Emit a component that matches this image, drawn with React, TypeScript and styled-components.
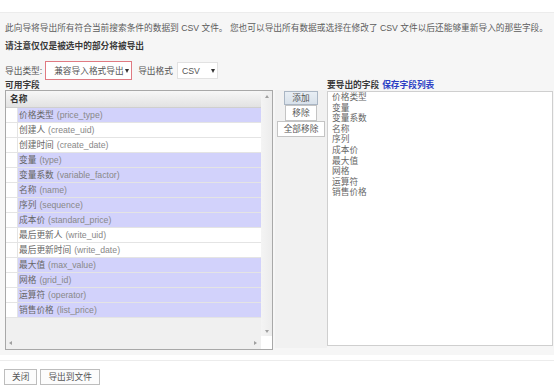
import React from 'react';
import styled, { createGlobalStyle } from 'styled-components';

type Field = {
	label: string;
	name: string;
	selected: boolean;
};

const fields: Field[] = [
	{ label: '价格类型', name: 'price_type', selected: true },
	{ label: '创建人', name: 'create_uid', selected: false },
	{ label: '创建时间', name: 'create_date', selected: false },
	{ label: '变量', name: 'type', selected: true },
	{ label: '变量系数', name: 'variable_factor', selected: true },
	{ label: '名称', name: 'name', selected: true },
	{ label: '序列', name: 'sequence', selected: true },
	{ label: '成本价', name: 'standard_price', selected: true },
	{ label: '最后更新人', name: 'write_uid', selected: false },
	{ label: '最后更新时间', name: 'write_date', selected: false },
	{ label: '最大值', name: 'max_value', selected: true },
	{ label: '网格', name: 'grid_id', selected: true },
	{ label: '运算符', name: 'operator', selected: true },
	{ label: '销售价格', name: 'list_price', selected: true },
];

const exported = ['价格类型', '变量', '变量系数', '名称', '序列', '成本价', '最大值', '网格', '运算符', '销售价格'];

const GlobalStyle = createGlobalStyle`
	html, body {
		margin: 0;
		padding: 0;
		background: #fff;
	}
	body {
		font-family: "Liberation Sans", "Noto Sans CJK SC", sans-serif;
		font-size: 8.7px;
		line-height: 12px;
		color: #5a5a5a;
	}
`;

const TopStrip = styled.div`
	height: 12px;
	border-bottom: 1px solid #ececec;
`;

const Main = styled.div`
	background: #f6f6f6;
	padding: 9px 1px 5px 5px;
`;

const Intro = styled.div`
	height: 12px;
	line-height: 12px;
	white-space: nowrap;
	font-size: 8.7px;
	color: #5c5c5c;
`;

const Notice = styled.div`
	margin-top: 6px;
	height: 12px;
	line-height: 12px;
	font-weight: bold;
	white-space: nowrap;
	color: #3a3a3a;
`;

const TypeRow = styled.div`
	margin-top: 9px;
	height: 19px;
	display: flex;
	align-items: center;
	white-space: nowrap;
`;

const Label = styled.span<{ $gap?: number }>`
	margin-right: ${p => p.$gap ?? 3}px;
	color: #555;
`;

const Highlight = styled.div`
	height: 17px;
	width: 85px;
	border: 1px solid #e07a82;
	background: #fff;
	display: flex;
	margin-right: 6px;
`;

const FakeSelect = styled.div<{ $w: number; $pad: number }>`
	box-sizing: border-box;
	width: ${p => p.$w}px;
	height: 17px;
	display: flex;
	align-items: center;
	justify-content: space-between;
	padding: 0 2px 0 ${p => p.$pad}px;
	background: #fff;
	color: #555;
	white-space: nowrap;
`;

const CsvBox = styled(FakeSelect)`
	border: 1px solid #e2e2e2;
`;

const Caret = styled.span`
	flex: none;
	width: 0;
	height: 0;
	border-left: 2.5px solid transparent;
	border-right: 2.5px solid transparent;
	border-top: 4px solid #333;
`;

const Fields = styled.div`
	display: grid;
	grid-template-columns: 268px 54px 226px;
	grid-template-rows: 10px 260px;
`;

const ColTitle = styled.div`
	font-weight: bold;
	color: #3a3a3a;
	line-height: 10px;
	white-space: nowrap;
`;

const SaveLink = styled.a`
	color: #2b3fc4;
	font-weight: bold;
	margin-left: 3px;
	text-decoration: none;
`;

const GridBox = styled.div`
	box-sizing: border-box;
	border: 1px solid #a8a8a8;
	display: flex;
	flex-direction: column;
	background: #f0f0f0;
`;

const GridTop = styled.div`
	flex: 1;
	display: flex;
	min-height: 0;
`;

const GridContent = styled.div`
	flex: 1;
	display: flex;
	flex-direction: column;
`;

const Header = styled.div`
	height: 16px;
	display: flex;
	align-items: center;
	padding-left: 4px;
	font-weight: bold;
	color: #333;
	background: linear-gradient(#f7f7f7, #e2e2e2);
	border-bottom: 1px solid #cfcfcf;
`;

const Row = styled.div`
	height: 14px;
	display: flex;
	border-bottom: 1px solid #e4e4e4;
	background: #fff;
`;

const CheckCell = styled.div`
	width: 11px;
	border-right: 1px solid #e4e4e4;
	background: #fff;
`;

const NameCell = styled.div<{ $selected: boolean }>`
	flex: 1;
	display: flex;
	align-items: center;
	padding-left: 1px;
	background: ${p => (p.$selected ? '#d2d2fb' : '#fff')};
	color: #666;
	white-space: nowrap;
`;

const TechName = styled.span`
	color: #888;
	margin-left: 3px;
`;

const VScroll = styled.div`
	width: 11px;
	display: flex;
	flex-direction: column;
	justify-content: space-between;
	align-items: center;
	padding: 4px 0 3px;
	background: linear-gradient(90deg, #f4f4f4, #ececec);
`;

const HScrollRow = styled.div`
	height: 13px;
	display: flex;
`;

const HScroll = styled.div`
	flex: 1;
	display: flex;
	justify-content: space-between;
	align-items: center;
	padding: 0 4px 0 3px;
	background: #f0f0f0;
`;

const Corner = styled.div`
	width: 11px;
	background: #fff;
`;

const Tri = styled.span<{ $dir: 'up' | 'down' | 'left' | 'right' }>`
	width: 0;
	height: 0;
	${p =>
		p.$dir === 'up' || p.$dir === 'down'
			? `border-left: 2px solid transparent; border-right: 2px solid transparent; border-${
					p.$dir === 'up' ? 'bottom' : 'top'
			  }: 3px solid #a0a0a0;`
			: `border-top: 2px solid transparent; border-bottom: 2px solid transparent; border-${
					p.$dir === 'left' ? 'right' : 'left'
			  }: 3px solid #a0a0a0;`}
`;

const Actions = styled.div`
	margin-left: 2px;
	height: 258px;
	background: #f1f1f1;
	display: flex;
	flex-direction: column;
	align-items: center;
	padding-top: 1px;
	box-sizing: border-box;
`;

const ActionButton = styled.button<{ $primary?: boolean }>`
	font: inherit;
	color: #555;
	height: ${p => (p.$primary ? 14 : 16)}px;
	padding: 0 ${p => (p.$primary ? 7 : 6)}px;
	margin: 0;
	border: 1px solid ${p => (p.$primary ? '#aab6c4' : '#c4c4c4')};
	background: ${p => (p.$primary ? 'linear-gradient(#e8eef4, #d8e1ea)' : '#fff')};
	line-height: 12px;
	white-space: nowrap;
	cursor: pointer;
`;

const ExportList = styled.div`
	margin-top: 1px;
	height: 255px;
	box-sizing: border-box;
	border: 1px solid #cfcfcf;
	background: #fff;
	padding: 0 4px;
`;

const ExportItem = styled.div`
	line-height: 10.6px;
	color: #666;
`;

const Footer = styled.div`
	margin-top: 5px;
	border-top: 1px solid #ececec;
	padding: 8px 4px 0;
	display: flex;
	gap: 3px;
`;

const FooterButton = styled.button`
	font: inherit;
	color: #555;
	height: 16px;
	padding: 0 7px;
	margin: 0;
	border: 1px solid #bdbdbd;
	background: #fcfcfc;
	line-height: 12px;
	white-space: nowrap;
`;

export default function App() {
	return (
		<>
			<GlobalStyle />
			<TopStrip />
			<Main>
				<Intro>
					此向导将导出所有符合当前搜索条件的数据到 CSV 文件。 您也可以导出所有数据或选择在修改了 CSV 文件以后还能够重新导入的那些字段。
				</Intro>
				<Notice>请注意仅仅是被选中的部分将被导出</Notice>
				<TypeRow>
					<Label>导出类型:</Label>
					<Highlight>
						<FakeSelect $w={85} $pad={8}>
							兼容导入格式导出
							<Caret />
						</FakeSelect>
					</Highlight>
					<Label $gap={4}>导出格式</Label>
					<CsvBox $w={41} $pad={4}>
						CSV
						<Caret />
					</CsvBox>
				</TypeRow>
				<Fields>
					<ColTitle>可用字段</ColTitle>
					<span />
					<ColTitle>
						要导出的字段<SaveLink href="#">保存字段列表</SaveLink>
					</ColTitle>
					<GridBox>
						<GridTop>
							<GridContent>
								<Header>名称</Header>
								{fields.map(f => (
									<Row key={f.name}>
										<CheckCell />
										<NameCell $selected={f.selected}>
											{f.label}
											<TechName>({f.name})</TechName>
										</NameCell>
									</Row>
								))}
							</GridContent>
							<VScroll>
								<Tri $dir="up" />
								<Tri $dir="down" />
							</VScroll>
						</GridTop>
						<HScrollRow>
							<HScroll>
								<Tri $dir="left" />
								<Tri $dir="right" />
							</HScroll>
							<Corner />
						</HScrollRow>
					</GridBox>
					<Actions>
						<ActionButton $primary>添加</ActionButton>
						<ActionButton>移除</ActionButton>
						<ActionButton>全部移除</ActionButton>
					</Actions>
					<ExportList>
						{exported.map(name => (
							<ExportItem key={name}>{name}</ExportItem>
						))}
					</ExportList>
				</Fields>
			</Main>
			<Footer>
				<FooterButton>关闭</FooterButton>
				<FooterButton>导出到文件</FooterButton>
			</Footer>
		</>
	);
}
